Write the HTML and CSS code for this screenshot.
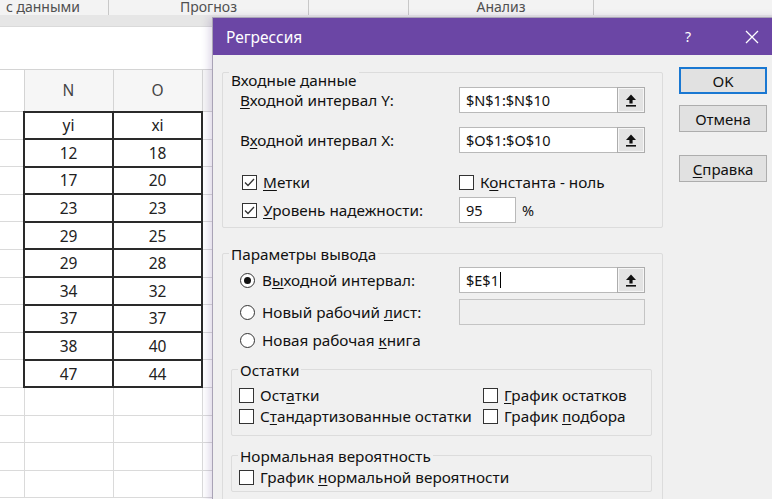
FILE: index.html
```html
<!DOCTYPE html>
<html lang="ru">
<head>
<meta charset="utf-8">
<title>Регрессия</title>
<link rel="stylesheet" href="styles.css">
</head>
<body>
<div class="app">
  <div class="ribbon">
    <div class="rg rg-data"><span>с данными</span></div>
    <div class="rg rg-forecast"><span>Прогноз</span></div>
    <div class="rg rg-empty"></div>
    <div class="rg rg-analysis"><span>Анализ</span></div>
    <div class="rg rg-rest"></div>
  </div>
  <div class="ribbon-edge"></div>
  <div class="formula-bar"></div>

  <table class="sheet">
    <colgroup><col class="c-stub"><col class="c-col"><col class="c-col"><col class="c-rest"></colgroup>
    <thead>
      <tr><th></th><th>N</th><th>O</th><th></th></tr>
    </thead>
    <tbody>
      <tr><td></td><td class="t">yi</td><td class="t">xi</td><td></td></tr>
      <tr><td></td><td class="t">12</td><td class="t">18</td><td></td></tr>
      <tr><td></td><td class="t">17</td><td class="t">20</td><td></td></tr>
      <tr><td></td><td class="t">23</td><td class="t">23</td><td></td></tr>
      <tr><td></td><td class="t">29</td><td class="t">25</td><td></td></tr>
      <tr><td></td><td class="t">29</td><td class="t">28</td><td></td></tr>
      <tr><td></td><td class="t">34</td><td class="t">32</td><td></td></tr>
      <tr><td></td><td class="t">37</td><td class="t">37</td><td></td></tr>
      <tr><td></td><td class="t">38</td><td class="t">40</td><td></td></tr>
      <tr><td></td><td class="t">47</td><td class="t">44</td><td></td></tr>
      <tr><td></td><td></td><td></td><td></td></tr>
      <tr><td></td><td></td><td></td><td></td></tr>
      <tr><td></td><td></td><td></td><td></td></tr>
      <tr><td></td><td></td><td></td><td></td></tr>
    </tbody>
  </table>

  <div class="dialog">
    <div class="titlebar">
      <span class="title">Регрессия</span>
      <span class="help">?</span>
      <span class="close">
        <svg width="14" height="14" viewBox="0 0 14 14"><path d="M1 1 L13 13 M13 1 L1 13" stroke="#fff" stroke-width="1.3" fill="none"/></svg>
      </span>
    </div>

    <div class="dlg-body">
      <div class="groups">
        <div class="group g-input">
          <div class="group-title">Входные данные</div>

          <div class="row row-y">
            <span class="lbl"><u>В</u>ходной интервал Y:</span>
            <div class="ref">
              <div class="ref-text">$N$1:$N$10</div>
              <div class="ref-btn"><svg width="12" height="13" viewBox="0 0 12 13"><path d="M6 0.5 L11 6 H7.6 V9.5 H4.4 V6 H1 Z" fill="#111"/><rect x="1" y="11" width="10" height="1.6" fill="#111"/></svg></div>
            </div>
          </div>

          <div class="row row-x">
            <span class="lbl">В<u>х</u>одной интервал X:</span>
            <div class="ref">
              <div class="ref-text">$O$1:$O$10</div>
              <div class="ref-btn"><svg width="12" height="13" viewBox="0 0 12 13"><path d="M6 0.5 L11 6 H7.6 V9.5 H4.4 V6 H1 Z" fill="#111"/><rect x="1" y="11" width="10" height="1.6" fill="#111"/></svg></div>
            </div>
          </div>

          <div class="row row-check">
            <span class="opt"><span class="box"><svg width="13" height="13" viewBox="0 0 13 13"><path d="M2 6.5 L5 9.5 L11 3" stroke="#333" stroke-width="1.3" fill="none"/></svg></span><span class="txt"><u>М</u>етки</span></span>
            <span class="opt"><span class="box"></span><span class="txt">К<u>о</u>нстанта - ноль</span></span>
          </div>

          <div class="row row-level">
            <span class="opt"><span class="box"><svg width="13" height="13" viewBox="0 0 13 13"><path d="M2 6.5 L5 9.5 L11 3" stroke="#333" stroke-width="1.3" fill="none"/></svg></span><span class="txt"><u>У</u>ровень надежности:</span></span>
            <div class="field field-level">95</div>
            <span class="pct">%</span>
          </div>
        </div>

        <div class="group g-output">
          <div class="group-title">Параметры вывода</div>

          <div class="row row-out1">
            <span class="opt"><span class="radio on"></span><span class="txt">В<u>ы</u>ходной интервал:</span></span>
            <div class="ref">
              <div class="ref-text">$E$1<span class="caret"></span></div>
              <div class="ref-btn"><svg width="12" height="13" viewBox="0 0 12 13"><path d="M6 0.5 L11 6 H7.6 V9.5 H4.4 V6 H1 Z" fill="#111"/><rect x="1" y="11" width="10" height="1.6" fill="#111"/></svg></div>
            </div>
          </div>

          <div class="row row-out2">
            <span class="opt"><span class="radio"></span><span class="txt">Новый рабочий <u>л</u>ист:</span></span>
            <div class="field field-off"></div>
          </div>

          <div class="row row-out3">
            <span class="opt"><span class="radio"></span><span class="txt">Новая рабочая <u>к</u>нига</span></span>
          </div>

          <div class="subgroup sg-resid">
            <div class="group-title">Остатки</div>
            <div class="row row-sub row-sub1">
              <span class="opt opt-wide"><span class="box"></span><span class="txt">Ост<u>а</u>тки</span></span>
              <span class="opt"><span class="box"></span><span class="txt"><u>Г</u>рафик остатков</span></span>
            </div>
            <div class="row row-sub row-sub2">
              <span class="opt opt-wide"><span class="box"></span><span class="txt">С<u>т</u>андартизованные остатки</span></span>
              <span class="opt"><span class="box"></span><span class="txt">График <u>п</u>одбора</span></span>
            </div>
          </div>

          <div class="subgroup sg-normal">
            <div class="group-title">Нормальная вероятность</div>
            <div class="row row-sub row-sub3">
              <span class="opt"><span class="box"></span><span class="txt">График <u>н</u>ормальной вероятности</span></span>
            </div>
          </div>
        </div>
      </div>

      <div class="buttons">
        <div class="btn btn-ok">OK</div>
        <div class="btn btn-cancel">Отмена</div>
        <div class="btn btn-help"><span><u>С</u>правка</span></div>
      </div>
    </div>
  </div>
</div>
</body>
</html>
```

FILE: styles.css
```css
* { box-sizing: border-box; }

html, body {
  margin: 0;
  padding: 0;
}

body {
  width: 772px;
  height: 499px;
  overflow: hidden;
  background: #fff;
  font-family: "Noto Sans", "Open Sans", sans-serif;
}

.app {
  position: relative;
  width: 772px;
  height: 499px;
  overflow: hidden;
}

/* ---- ribbon group captions ---- */
.ribbon {
  display: flex;
  height: 15px;
  background: #f3f3f3;
  color: #505050;
  font-size: 14px;
  line-height: 16px;
  overflow: hidden;
}

.rg {
  display: flex;
  align-items: flex-end;
  justify-content: center;
  border-right: 1px solid #c8c8c8;
  white-space: nowrap;
  flex: none;
}

.rg-data { width: 109px; justify-content: flex-end; padding-right: 28px; }
.rg-forecast { width: 200px; }
.rg-empty { width: 100px; }
.rg-analysis { width: 185px; }
.rg-rest { flex: 1; border-right: 0; }

.ribbon-edge {
  height: 12px;
  background: #e6e6e6;
  border-bottom: 1px solid #dadada;
}

.formula-bar {
  height: 42px;
  background: #fff;
}

/* ---- worksheet ---- */
.sheet {
  border-collapse: collapse;
  table-layout: fixed;
  width: 772px;
  font-size: 15.5px;
  color: #222;
}

.c-stub { width: 24px; }
.c-col { width: 89px; }
.c-rest { width: 570px; }

.sheet th {
  height: 42px;
  padding: 0;
  background: #f6f6f6;
  border: 1px solid #d4d4d4;
  border-left: 0;
  font-weight: normal;
  color: #444;
}

.sheet th:first-child { background: #fff; }

.sheet td {
  height: 27.6px;
  padding: 0;
  text-align: center;
  border: 1px solid #dadada;
}

.sheet td:first-child { border-left: 0; }

.sheet td.t {
  border: 2px solid #2a2a2a;
}

/* ---- dialog window ---- */
.dialog {
  position: absolute;
  left: 212px;
  top: 17px;
  width: 580px;
  height: 500px;
  background: #f0f0f0;
  border: 1px solid #a9a3b6;
  box-shadow: -3px 0 8px rgba(70, 40, 120, 0.18);
  font-size: 15.3px;
  color: #111;
}

.titlebar {
  display: flex;
  align-items: center;
  height: 37px;
  background: #6b46a5;
  color: #fff;
  padding-left: 13px;
  font-size: 15.5px;
}

.title { flex: 1; }

.help {
  width: 20px;
  text-align: center;
  font-size: 14px;
}

.close {
  display: flex;
  justify-content: center;
  width: 24px;
  margin-left: 42px;
  margin-right: 27px;
}

.dlg-body {
  display: flex;
  padding-left: 9px;
}

.groups {
  width: 441px;
}

/* group boxes */
.group,
.subgroup {
  border: 1px solid #dcdcdc;
  border-radius: 2px;
}

.group-title {
  width: fit-content;
  line-height: 18px;
  padding: 0 2px;
  background: #f0f0f0;
  margin-left: 6px;
}

.g-input {
  margin-top: 17px;
  padding-bottom: 4px;
}

.g-input > .group-title { margin-top: -2px; }

.g-output {
  margin-top: 25px;
  height: 260px;
}

.g-output > .group-title { margin-top: -9px; }

.row {
  display: flex;
  align-items: center;
  padding-left: 17px;
  white-space: nowrap;
}

.lbl {
  width: 219px;
  flex: none;
}

u { text-decoration-thickness: 1px; text-underline-offset: 2px; }

.opt {
  display: flex;
  align-items: center;
  width: 219px;
  flex: none;
}

.row-y { height: 26px; margin-top: -2px; }
.row-x { height: 26px; margin-top: 14px; }
.row-check { height: 20px; margin-top: 19px; }
.row-level { height: 26px; margin-top: 5px; }

.row-check, .row-level { padding-left: 19px; }
.row-check .opt:first-child, .row-level .opt { width: 217px; }

.row-out1 { height: 26px; margin-top: 4px; }
.row-out2 { height: 26px; margin-top: 6px; }
.row-out3 { height: 20px; margin-top: 5px; }

/* reference edit field with collapse button */
.ref {
  display: flex;
  height: 26px;
}

.ref-text {
  display: flex;
  align-items: center;
  width: 158px;
  height: 26px;
  background: #fff;
  border: 1px solid #b9b9b9;
  border-right: 0;
  padding-left: 6px;
  font-size: 14.5px;
}

.ref-btn {
  display: flex;
  align-items: center;
  justify-content: center;
  width: 28px;
  height: 26px;
  background: #e3e3e3;
  border: 1px solid #adadad;
  box-shadow: inset 0 0 0 1px #f6f6f6;
}

.caret {
  display: inline-block;
  width: 1px;
  height: 16px;
  background: #000;
  margin-left: 1px;
}

.field {
  height: 26px;
  background: #fff;
  border: 1px solid #b9b9b9;
  padding-left: 6px;
  display: flex;
  align-items: center;
  font-size: 14.5px;
}

.field-level { width: 57px; }

.pct { margin-left: 6px; font-size: 14.5px; }

.field-off {
  width: 186px;
  background: #efefef;
  border-color: #c4c4c4;
}

/* check boxes and radio buttons */
.box {
  display: inline-flex;
  align-items: center;
  justify-content: center;
  width: 15px;
  height: 15px;
  flex: none;
  background: #fff;
  border: 1px solid #333;
  margin-right: 6px;
}

.radio {
  display: inline-flex;
  align-items: center;
  justify-content: center;
  width: 15px;
  height: 15px;
  flex: none;
  border-radius: 50%;
  background: #fff;
  border: 1px solid #333;
  margin-right: 7px;
}

.radio.on::after {
  content: "";
  width: 7px;
  height: 7px;
  border-radius: 50%;
  background: #111;
}

.subgroup {
  margin-left: 8px;
  width: 421px;
}

.subgroup > .group-title { margin-top: -9px; }

.sg-resid {
  margin-top: 19px;
  padding-bottom: 9px;
}

.sg-normal {
  margin-top: 19px;
  padding-bottom: 4px;
}

.row-sub { padding-left: 7px; height: 20px; }
.row-sub1 { margin-top: 6px; }
.row-sub2 { margin-top: 1px; }
.row-sub3 { margin-top: 2px; }

.row-sub .opt { width: auto; }
.row-sub .opt-wide { width: 244px; }

/* command buttons */
.buttons {
  display: flex;
  flex-direction: column;
  margin-left: 16px;
  width: 88px;
}

.btn {
  display: flex;
  align-items: center;
  justify-content: center;
  height: 27px;
  background: #e1e1e1;
  border: 1px solid #adadad;
  font-size: 15px;
}

.btn-ok {
  margin-top: 12px;
  border: 2px solid #1a78d2;
}

.btn-cancel { margin-top: 11px; }
.btn-help { margin-top: 23px; }
```
